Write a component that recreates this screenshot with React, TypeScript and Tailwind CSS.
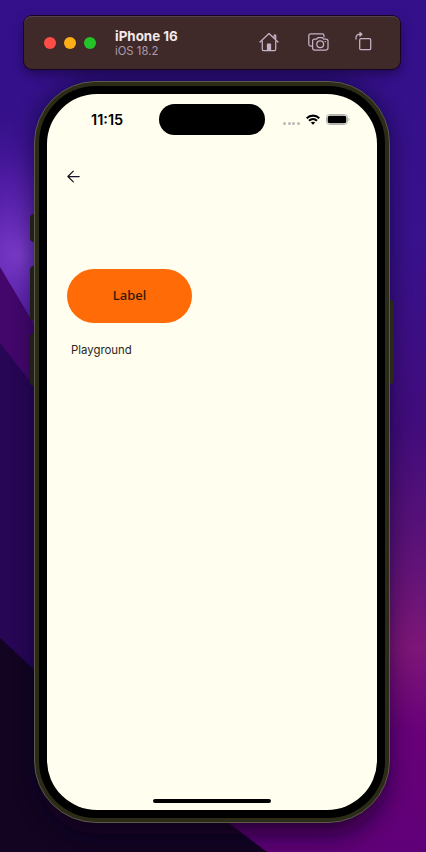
import React from "react";

function Wallpaper() {
  return (
    <svg className="absolute inset-0 h-full w-full" viewBox="0 0 426 852" preserveAspectRatio="none" aria-hidden="true">
      <defs>
        <linearGradient id="base" x1="0" y1="0" x2="0" y2="1">
          <stop offset="0" stopColor="#33108a" />
          <stop offset="0.28" stopColor="#38118c" />
          <stop offset="0.5" stopColor="#410c7c" />
          <stop offset="0.64" stopColor="#5b1278" />
          <stop offset="0.76" stopColor="#7d1678" />
          <stop offset="0.86" stopColor="#68007a" />
          <stop offset="1" stopColor="#600078" />
        </linearGradient>
        <linearGradient id="left" x1="0" y1="0" x2="1" y2="0">
          <stop offset="0" stopColor="#6f30c0" />
          <stop offset="1" stopColor="#6f30c0" stopOpacity="0.7" />
        </linearGradient>
        <radialGradient id="glow" cx="20" cy="255" r="150" gradientUnits="userSpaceOnUse">
          <stop offset="0" stopColor="#7a3bc9" />
          <stop offset="0.5" stopColor="#5a20ae" stopOpacity="0.7" />
          <stop offset="1" stopColor="#38118c" stopOpacity="0" />
        </radialGradient>
        <filter id="soft" x="-20%" y="-20%" width="140%" height="140%">
          <feGaussianBlur stdDeviation="13" />
        </filter>
      </defs>
      <rect width="426" height="852" fill="url(#base)" />
      <rect width="170" height="420" fill="url(#glow)" />
      <path d="M0 267 60 368V450H0Z" fill="#43076c" />
      <path d="M0 343 60 420V710H0Z" fill="#270656" />
      <path d="M0 638 60 694 230 824 267 852H0Z" fill="#130422" />
      <rect x="38" y="84" width="348" height="750" rx="60" fill="#10001a" opacity="0.78" filter="url(#soft)" />
    </svg>
  );
}

function HomeIcon() {
  return (
    <svg width="20" height="20" viewBox="0 0 20 20" fill="none" stroke="#c4b2c6" strokeWidth="1.25" strokeLinecap="round" strokeLinejoin="round">
      <path d="M1 10 10 1.5 19 10M3.3 9v8.2c0 .8.4 1.3 1.2 1.3h11c.8 0 1.2-.5 1.2-1.3V9M15.2 5.5V3h1.5v4" />
      <path d="M8.5 18v-6h3v6Z" fill="#c4b2c6" />
    </svg>
  );
}

function ScreenshotIcon() {
  return (
    <svg width="21" height="18" viewBox="0 0 21 18" fill="none" stroke="#c4b2c6" strokeWidth="1.25" strokeLinejoin="round">
      <path d="M4.5 13H2.7C1.5 13 .8 12.3.8 11.2V2.7C.8 1.6 1.5.9 2.7.9h11.5c1.1 0 1.8.7 1.8 1.8v1.5" />
      <path d="M6.7 6.2h2l1.2-1.6h4.5l1.3 1.6h2.2c1.3 0 2.1.7 2.1 1.9v7c0 1.2-.8 1.9-2.1 1.9H6.7c-1.3 0-2.1-.7-2.1-1.9v-7c0-1.2.8-1.9 2.1-1.9Z" />
      <circle cx="12.2" cy="11.2" r="3.4" />
      <path d="M16.7 8.6h1.2" />
    </svg>
  );
}

function RotateIcon() {
  return (
    <svg width="17" height="19" viewBox="0 0 17 19" fill="none" stroke="#c4b2c6" strokeWidth="1.25" strokeLinecap="round" strokeLinejoin="round">
      <rect x="4.7" y="6.7" width="11" height="11" rx="1.3" />
      <path d="M1 7V5.8C1 3.9 2.2 2.3 4 2.3h2" />
      <path d="M5 .6 6.9 2.3 5 4Z" fill="#c4b2c6" />
    </svg>
  );
}

function Toolbar() {
  return (
    <header className="relative ml-6 flex h-[53px] w-[376px] items-center rounded-[8px] bg-[#402a29] pl-5 shadow-[0_0_0_1px_#160421,inset_0_1px_0_#54434a,0_5px_12px_rgba(8,0,20,0.45)]">
      <div className="flex gap-2">
        <span className="size-3 rounded-full bg-[#ff4d45]" />
        <span className="size-3 rounded-full bg-[#ffae18]" />
        <span className="size-3 rounded-full bg-[#24c32a]" />
      </div>
      <div className="mt-[2px] ml-[19px] w-[144px]">
        <h1 className="text-[13.4px] leading-[15px] font-bold text-[#f3e9e8]">iPhone 16</h1>
        <p className="text-[11.3px] leading-[14px] text-[#ad9bac]">iOS 18.2</p>
      </div>
      <div className="-mt-[2px] flex items-center">
        <HomeIcon />
        <span className="ml-[29px]"><ScreenshotIcon /></span>
        <span className="ml-[26px]"><RotateIcon /></span>
      </div>
    </header>
  );
}

function StatusBar() {
  return (
    <div className="flex h-[31px] items-center">
      <span className="ml-[44px] w-[68px] text-[14.5px] font-semibold text-black">11:15</span>
      <span className="h-[31px] w-[106px] rounded-full bg-black" />
      <span className="mt-[7px] ml-[18px] flex gap-[1.5px]">
        <i className="size-[3px] rounded-full bg-[#bab8b9]" />
        <i className="size-[3px] rounded-full bg-[#bab8b9]" />
        <i className="size-[3px] rounded-full bg-[#bab8b9]" />
        <i className="size-[3px] rounded-full bg-[#bab8b9]" />
      </span>
      <svg className="ml-[6px]" width="14" height="11" viewBox="0 0 14 11" fill="none" stroke="black" strokeWidth="2.1">
        <path d="M.7 4.2c3.5-3.5 9.1-3.5 12.6 0M3 6.7c2.3-2.2 5.7-2.2 8 0" />
        <path d="M4.8 8.6c1.3-1.2 3.1-1.2 4.4 0L7 10.8Z" fill="black" stroke="none" />
      </svg>
      <svg className="ml-[6px]" width="24" height="11" viewBox="0 0 24 11">
        <rect x=".6" y=".6" width="20.8" height="9.8" rx="3" fill="none" stroke="#aaa8ad" />
        <rect x="1.7" y="1.7" width="18.6" height="7.6" rx="2" fill="black" />
        <path d="M22.5 3.7c1.3.6 1.3 3 0 3.6Z" fill="#aaa8ad" />
      </svg>
    </div>
  );
}

function Phone() {
  return (
    <main className="relative mt-3 ml-[34px] h-[742px] w-[356px]">
      <i className="absolute top-[133px] -left-[4px] h-[28px] w-[6px] rounded-l bg-[#202016]" />
      <i className="absolute top-[185px] -left-[4px] h-[55px] w-[6px] rounded-l bg-[#202016]" />
      <i className="absolute top-[252px] -left-[4px] h-[53px] w-[6px] rounded-l bg-[#202016]" />
      <i className="absolute top-[219px] -right-[4px] h-[84px] w-[6px] rounded-r bg-[#27271b]" />
      <div className="relative h-full rounded-[62px] border border-[#5a594b] bg-[#2b2b17] p-1">
        <div className="h-full rounded-[57px] bg-black p-2">
          <section className="flex h-full flex-col rounded-[50px] bg-[#fffeef] pt-[10px]">
            <StatusBar />
            <button className="mt-[35px] ml-5 size-[13px]" aria-label="Back">
              <svg width="13" height="13" viewBox="0 0 13 13" fill="none" stroke="#171323" strokeWidth="1.25" strokeLinecap="round" strokeLinejoin="round">
                <path d="M12.2 6.5H1M6.3 1.1.9 6.5l5.4 5.4" />
              </svg>
            </button>
            <button className="mt-[86px] ml-5 flex h-[54px] w-[125px] items-center justify-center rounded-full bg-[#ff6b06] font-['Noto_Sans',sans-serif] text-[13px] font-medium text-[#331704]">
              Label
            </button>
            <p className="mt-[18px] ml-[24px] text-[11.4px] leading-[18px] text-[#292723]">Playground</p>
            <span className="mt-auto mb-[7px] h-1 w-[118px] self-center rounded-full bg-black" />
          </section>
        </div>
      </div>
    </main>
  );
}

export default function App() {
  return (
    <div className="relative h-[852px] w-[426px] overflow-hidden bg-[#35108f] pt-4 font-[Inter,'Liberation_Sans',sans-serif]">
      <Wallpaper />
      <Toolbar />
      <Phone />
    </div>
  );
}
